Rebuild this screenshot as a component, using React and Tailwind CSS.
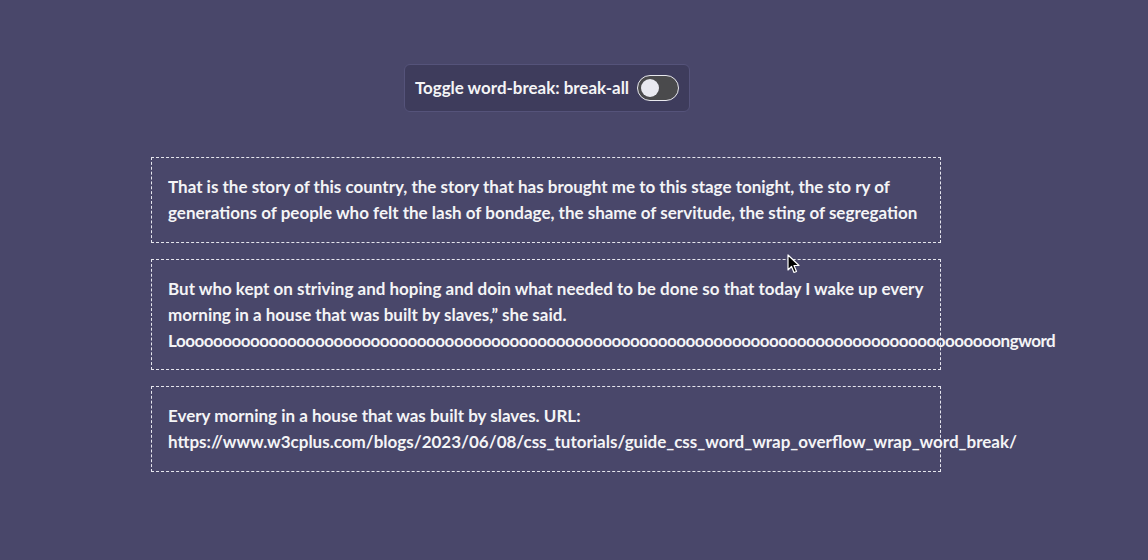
import React, { useState } from "react";

const lineCls = "whitespace-nowrap h-[26px] leading-[26px]";

export default function App() {
  const [on, setOn] = useState(false);
  return (
    <div className="relative w-[1148px] h-[560px] bg-[#49476a] text-[#f4f4f6] overflow-hidden" style={{ fontFamily: "Lato, 'Open Sans', sans-serif" }}>
      <div className="ml-[151px] w-[790px] pt-[64px] flex flex-col">
        <div className="self-center ml-[2px] flex items-center gap-[8px] h-[48px] pl-[10px] pr-[10px] rounded-[6px] bg-[#3e3c5c] border border-[#55537a]">
          <span className="text-[16.95px] font-bold">Toggle word-break: break-all</span>
          <button
            onClick={() => setOn(!on)}
            className="w-[42px] h-[26px] rounded-full border-[1.5px] border-[#e8e8ee] bg-[#4a4a4c] flex items-center px-[3px]"
          >
            <span className={"block w-[18px] h-[18px] rounded-full bg-[#e9e9f0] " + (on ? "ml-auto" : "")} />
          </button>
        </div>

        <div className="mt-[45px] flex flex-col gap-[16px] text-[17px] font-bold">
          <div className="border border-dashed border-[#e6e6ee] px-[16px] py-[16px]">
            <div className={lineCls}>That is the story of this country, the story that has brought me to this stage tonight, the sto ry of</div>
            <div className={lineCls}>generations of people who felt the lash of bondage, the shame of servitude, the sting of segregation</div>
          </div>
          <div className="border border-dashed border-[#e6e6ee] px-[16px] pt-[16px] pb-[15px]">
            <div className={lineCls}>But who kept on striving and hoping and doin what needed to be done so that today I wake up every</div>
            <div className={lineCls}>morning in a house that was built by slaves,” she said.</div>
            <div className={lineCls + " tracking-[-0.5px]"}>Looooooooooooooooooooooooooooooooooooooooooooooooooooooooooooooooooooooooooooooooooooooooongword</div>
          </div>
          <div className="border border-dashed border-[#e6e6ee] px-[16px] py-[16px]">
            <div className={lineCls}>Every morning in a house that was built by slaves. URL:</div>
            <div className={lineCls}>https://www.w3cplus.com/blogs/2023/06/08/css_tutorials/guide_css_word_wrap_overflow_wrap_word_break/</div>
          </div>
        </div>
      </div>

      <svg className="absolute left-[787px] top-[254px]" width="14" height="20" viewBox="0 0 14 20">
        <path d="M1 1 L1 16 L4.5 12.5 L7 18.5 L9.5 17.5 L7 11.5 L12 11.5 Z" fill="#000" stroke="#fff" strokeWidth="1.2" strokeLinejoin="round" />
      </svg>
    </div>
  );
}
